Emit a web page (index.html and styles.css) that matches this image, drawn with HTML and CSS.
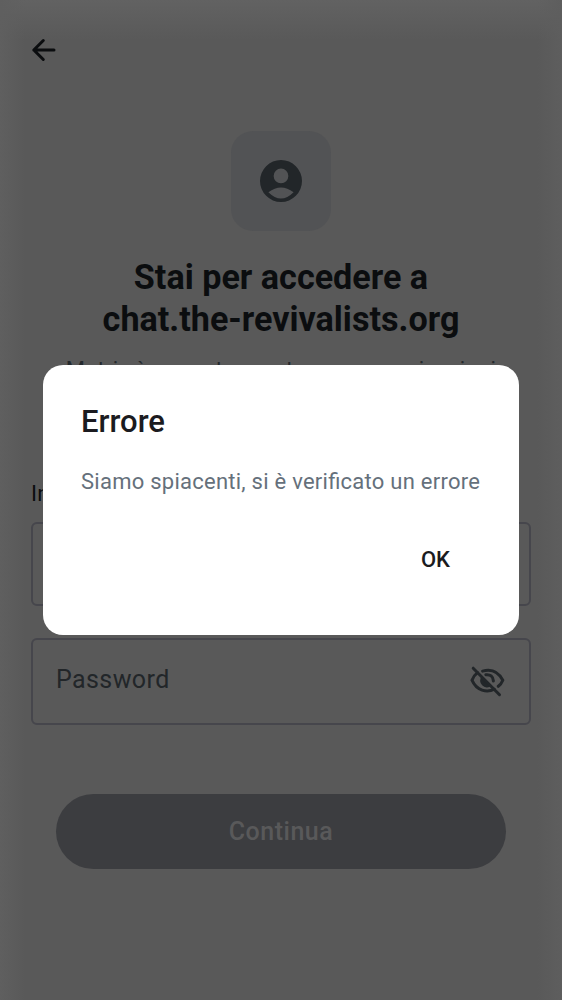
FILE: index.html
```html
<!DOCTYPE html>
<html lang="it">
<head>
<meta charset="utf-8">
<title>Accesso</title>
<link rel="stylesheet" href="styles.css">
</head>
<body>
<main class="screen">
  <header class="topbar">
    <svg class="back" viewBox="0 0 26 26"><path d="M12.3 3.5 2.8 13l9.5 9.5M2.8 13H23" /></svg>
  </header>
  <section class="intro">
    <div class="avatar">
      <svg class="avatar-icon" viewBox="2 2 20 20"><path fill-rule="evenodd" d="M12 2a10 10 0 1 0 0 20 10 10 0 0 0 0-20zm0 4.1a3.5 3.5 0 1 1 0 7 3.5 3.5 0 0 1 0-7zM6 17.3Q12 12.8 18 17.3Q12 23.3 6 17.3z"/></svg>
    </div>
    <h1 class="title">Stai per accedere a<br>chat.the-revivalists.org</h1>
    <p class="subtitle">Matrix è una rete aperta per comunicazioni</p>
  </section>
  <form class="form">
    <div class="label">In</div>
    <div class="field field-user"></div>
    <div class="field field-password">
      <span class="placeholder">Password</span>
      <svg class="eye" viewBox="0 0 36 32"><g class="eye-line"><path d="M12.6 5.1Q26 1.5 32.8 14.2Q31.3 18 28.3 20.3M7.5 6.6Q3.7 9.5 2 14.2C6.5 24.8 17 27 24.3 23.2"/><path d="M15.8 8.7Q22.8 8 23.4 15"/></g><path d="M11.5 10.2a7 7 0 0 0 9.8 9.8z"/><path class="eye-slash" d="M3.2 2.2 29.5 28.7"/></svg>
    </div>
    <div class="submit">Continua</div>
  </form>
</main>
<div class="overlay">
  <div class="dialog" role="alertdialog">
    <h2 class="dialog-title">Errore</h2>
    <p class="dialog-text">Siamo spiacenti, si è verificato un errore</p>
    <div class="dialog-actions"><span class="ok">OK</span></div>
  </div>
</div>
</body>
</html>
```
FILE: styles.css
```css
* { box-sizing: border-box; }
body { margin: 0; font-family: Roboto, sans-serif; }
h1, h2, p { margin: 0; font-weight: 400; }
svg { display: block; fill: currentColor; flex: none; }

.screen {
  height: 1000px;
  overflow: hidden;
  padding: 0 31px;
  background:
    linear-gradient(90deg, #5f5f5f, #59595900 25px, #59595900 537px, #5e5e5e),
    linear-gradient(#626262, #595959 40px);
}
.topbar { height: 131px; padding-top: 37px; color: #0b0d0f; }
.back { width: 26px; height: 26px; fill: none; stroke: currentColor; stroke-width: 3; stroke-linecap: round; stroke-linejoin: round; }

.intro { display: flex; flex-direction: column; align-items: center; height: 350px; white-space: nowrap; }
.avatar { display: grid; place-items: center; width: 100px; height: 100px; border-radius: 22px; background: #525355; color: #222629; flex: none; }
.avatar-icon { width: 42px; height: 42px; }
.title { margin-top: 25px; font-size: 34.15px; line-height: 42px; font-weight: 700; text-align: center; color: #0b0d0f; }
.subtitle { margin-top: 14px; font-size: 22px; line-height: 31px; letter-spacing: 0.3px; text-align: center; color: #24292d; }

.label { height: 41px; font-size: 22px; line-height: 26px; letter-spacing: 0.3px; color: #0b0d0f; }
.field { display: flex; align-items: center; justify-content: space-between; border: 2px solid #46464c; border-radius: 6px; padding: 0 23px; }
.field-user { height: 84px; }
.field-password { height: 87px; margin-top: 32px; color: #222629; }
.placeholder { font-size: 25px; letter-spacing: 0.4px; margin-top: -5px; }
.eye { width: 36px; height: 32px; }
.eye-line { fill: none; stroke: currentColor; stroke-width: 3; stroke-linecap: round; }
.eye-slash { stroke: currentColor; stroke-width: 3; stroke-linecap: round; }
.submit { display: grid; place-items: center; height: 75px; margin: 69px 25px 0; border-radius: 38px; background: #3c3d40; color: #59595a; font-size: 25px; font-weight: 500; letter-spacing: 0.5px; }

.overlay { position: absolute; inset: 0; display: grid; place-items: center; }
.dialog { width: 476px; height: 270px; padding: 38px; border-radius: 20px; background: #fff; }
.dialog-title { font-size: 31px; line-height: 38px; font-weight: 500; color: #1b1b20; }
.dialog-text { margin-top: 27px; font-size: 22px; line-height: 28px; letter-spacing: 0.25px; font-feature-settings: "liga" 1; white-space: nowrap; color: #65707b; }
.dialog-actions { display: flex; justify-content: flex-end; margin-top: 50px; padding-right: 31px; }
.ok { font-size: 22px; line-height: 28px; font-weight: 500; letter-spacing: 0; color: #1b1b20; }
```
